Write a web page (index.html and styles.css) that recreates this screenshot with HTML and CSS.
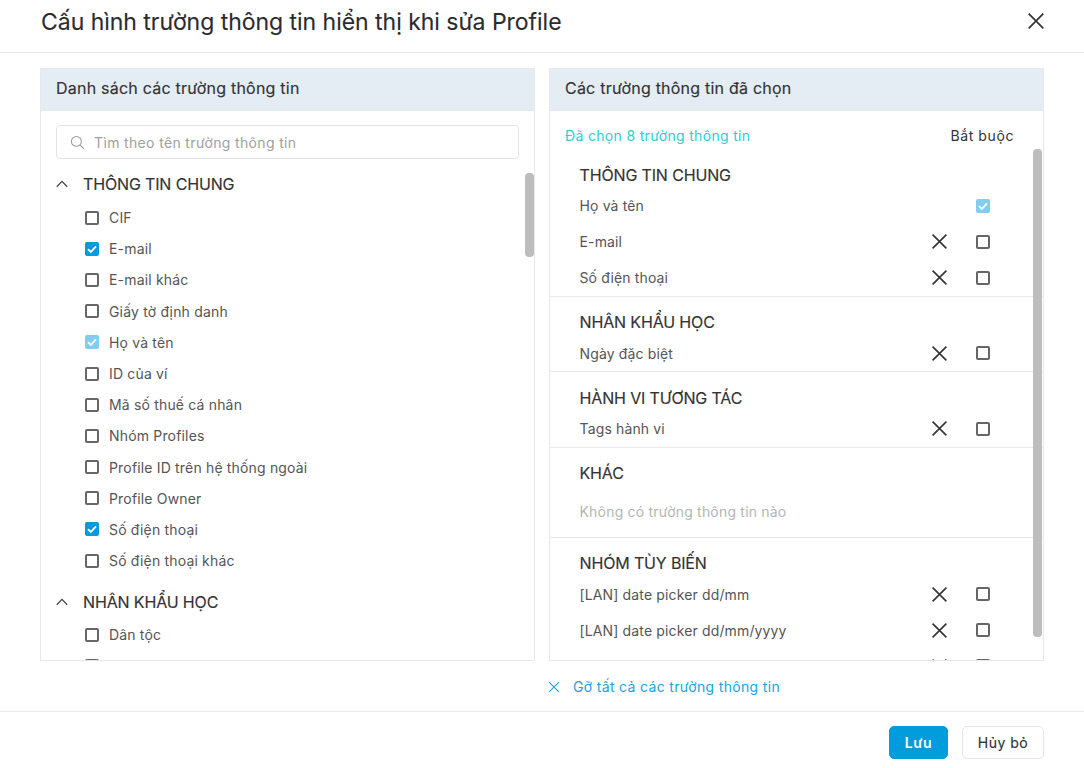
FILE: index.html
```html
<!DOCTYPE html>
<html lang="vi">
<head>
<meta charset="utf-8">
<title>Cấu hình</title>
<link rel="stylesheet" href="styles.css">
</head>
<body>
<svg class="defs" width="0" height="0" aria-hidden="true">
  <symbol id="x" viewBox="0 0 16 16"><path d="M1.5 1.5 14.5 14.5M14.5 1.5 1.5 14.5" fill="none" stroke="currentColor" stroke-width="1.5"/></symbol>
  <symbol id="chev" viewBox="0 0 12 8"><path d="M.8 6.8 6 1.4l5.2 5.4" fill="none" stroke="currentColor" stroke-width="1.3"/></symbol>
  <symbol id="tick" viewBox="0 0 14 14"><path d="M3 7.2 5.8 10 11 4.4" fill="none" stroke="#fff" stroke-width="1.8"/></symbol>
</svg>
<div class="modal">
  <header class="top">
    <h1 class="title">Cấu hình trường thông tin hiển thị khi sửa Profile</h1>
    <svg class="close"><use href="#x"/></svg>
  </header>
  <main class="columns">
    <section class="panel">
      <h2 class="panel-head">Danh sách các trường thông tin</h2>
      <div class="search">
        <svg class="search-icon" viewBox="0 0 16 16"><circle cx="6.8" cy="6.8" r="5.3" fill="none" stroke="currentColor" stroke-width="1.1"/><path d="m10.8 10.8 4 4" fill="none" stroke="currentColor" stroke-width="1.1"/></svg>
        <span>Tìm theo tên trường thông tin</span>
      </div>
      <div class="tree">
        <div class="tree-group"><svg class="chev"><use href="#chev"/></svg>THÔNG TIN CHUNG</div>
        <div class="opt"><i class="box"></i>CIF</div>
        <div class="opt"><i class="box on"><svg><use href="#tick"/></svg></i>E-mail</div>
        <div class="opt"><i class="box"></i>E-mail khác</div>
        <div class="opt"><i class="box"></i>Giấy tờ định danh</div>
        <div class="opt"><i class="box lock"><svg><use href="#tick"/></svg></i>Họ và tên</div>
        <div class="opt"><i class="box"></i>ID của ví</div>
        <div class="opt"><i class="box"></i>Mã số thuế cá nhân</div>
        <div class="opt"><i class="box"></i>Nhóm Profiles</div>
        <div class="opt"><i class="box"></i>Profile ID trên hệ thống ngoài</div>
        <div class="opt"><i class="box"></i>Profile Owner</div>
        <div class="opt"><i class="box on"><svg><use href="#tick"/></svg></i>Số điện thoại</div>
        <div class="opt"><i class="box"></i>Số điện thoại khác</div>
        <div class="tree-group second"><svg class="chev"><use href="#chev"/></svg>NHÂN KHẨU HỌC</div>
        <div class="opt"><i class="box"></i>Dân tộc</div>
        <div class="opt"><i class="box"></i></div>
      </div>
      <div class="thumb thumb-left"></div>
    </section>
    <section class="panel">
      <h2 class="panel-head">Các trường thông tin đã chọn</h2>
      <div class="summary"><span class="count">Đã chọn 8 trường thông tin</span><span class="req">Bắt buộc</span></div>
      <div class="picked">
        <div class="block first">
          <h3 class="block-title">THÔNG TIN CHUNG</h3>
          <div class="row"><span class="name">Họ và tên</span><i class="box lock"><svg><use href="#tick"/></svg></i></div>
          <div class="row"><span class="name">E-mail</span><svg class="rm"><use href="#x"/></svg><i class="box"></i></div>
          <div class="row"><span class="name">Số điện thoại</span><svg class="rm"><use href="#x"/></svg><i class="box"></i></div>
        </div>
        <div class="block">
          <h3 class="block-title">NHÂN KHẨU HỌC</h3>
          <div class="row"><span class="name">Ngày đặc biệt</span><svg class="rm"><use href="#x"/></svg><i class="box"></i></div>
        </div>
        <div class="block">
          <h3 class="block-title">HÀNH VI TƯƠNG TÁC</h3>
          <div class="row"><span class="name">Tags hành vi</span><svg class="rm"><use href="#x"/></svg><i class="box"></i></div>
        </div>
        <div class="block">
          <h3 class="block-title">KHÁC</h3>
          <p class="empty">Không có trường thông tin nào</p>
        </div>
        <div class="block">
          <h3 class="block-title">NHÓM TÙY BIẾN</h3>
          <div class="row"><span class="name">[LAN] date picker dd/mm</span><svg class="rm"><use href="#x"/></svg><i class="box"></i></div>
          <div class="row"><span class="name">[LAN] date picker dd/mm/yyyy</span><svg class="rm"><use href="#x"/></svg><i class="box"></i></div>
          <div class="row"><span class="name"></span><svg class="rm"><use href="#x"/></svg><i class="box"></i></div>
        </div>
      </div>
      <div class="thumb thumb-right"></div>
    </section>
  </main>
  <div class="clear-row">
    <a class="clear"><svg class="clear-x"><use href="#x"/></svg>Gỡ tất cả các trường thông tin</a>
  </div>
  <footer class="bottom">
    <button class="btn primary">Lưu</button>
    <button class="btn">Hủy bỏ</button>
  </footer>
</div>
</body>
</html>
```

FILE: styles.css
```css
* { box-sizing: border-box; }
html, body { margin: 0; padding: 0; background: #fff; overflow: hidden; }
body { font-family: Inter, "Noto Sans", sans-serif; color: #333; width: 1084px; height: 768px; }
.defs { position: absolute; }
.modal { height: 768px; display: flex; flex-direction: column; }

.top { height: 53px; flex: none; border-bottom: 1px solid #e6e8ee; display: flex; justify-content: space-between; align-items: flex-start; padding: 0 39px 0 41px; }
.title { margin: 0; font-size: 23px; font-weight: 400; line-height: 44px; letter-spacing: -.03px; color: #2b2b2b; -webkit-text-stroke: .1px #2b2b2b; }
.close { width: 18px; height: 18px; margin-top: 12px; color: #333; }

.columns { display: flex; gap: 14px; padding: 15px 40px 0; height: 608px; flex: none; }
.panel { position: relative; width: 495px; height: 593px; border: 1px solid #e6e8ee; overflow: hidden; }
.panel-head { margin: 0; height: 42px; background: #e4ecf4; border-bottom: 1px solid #e6e8ee; padding-left: 15px; font-size: 16px; font-weight: 400; letter-spacing: .22px; line-height: 39px; color: #333; -webkit-text-stroke: .15px #333; }

.search { margin: 14px 15px 0; height: 34px; border: 1px solid #e2e4ea; border-radius: 4px; display: flex; align-items: center; padding-left: 13px; gap: 9px; font-size: 14px; color: #a0a0a0; letter-spacing: .35px; }
.search-icon { width: 15px; height: 15px; color: #9a9a9a; }

.tree { margin-top: 6px; padding-left: 15px; }
.tree-group { height: 37px; display: flex; align-items: center; font-size: 16px; color: #333; letter-spacing: -.15px; -webkit-text-stroke: .15px #333; }
.tree-group.second { margin-top: 9px; height: 34px; }
.chev { width: 12px; height: 8px; margin-right: 15px; color: #444; }
.opt { height: 31.2px; display: flex; align-items: center; padding-left: 29px; gap: 10px; font-size: 14px; color: #555; letter-spacing: .17px; }

.box { flex: none; display: block; width: 14px; height: 14px; border: 2px solid #666; border-radius: 2px; background: #fff; position: relative; }
.box svg { position: absolute; inset: -2px; width: 14px; height: 14px; }
.box.on { background: #009cdb; border-color: #009cdb; }
.box.lock { background: #80cdf0; border-color: #80cdf0; }

.thumb { position: absolute; background: #bdbdbd; border-radius: 4px; width: 9px; }
.thumb-left { left: 484px; top: 104px; height: 84px; }
.thumb-right { left: 483px; top: 80px; height: 488px; }

.summary { height: 38px; margin-top: 5px; padding: 0 29px 0 15px; display: flex; justify-content: space-between; align-items: center; font-size: 14px; letter-spacing: .33px; }
.count { color: #2bcfd4; }
.req { color: #333; letter-spacing: .6px; }

.block { border-bottom: 1px solid #e6e8ee; padding: 12.5px 0 0 29.5px; }
.block.first { padding-top: 8px; }
.block:last-child { border-bottom: 0; }
.block-title { margin: 0; height: 26px; font-size: 16px; font-weight: 400; line-height: 26px; letter-spacing: -.15px; color: #333; -webkit-text-stroke: .15px #333; }
.row { height: 36px; display: flex; align-items: center; padding-right: 53px; font-size: 14px; color: #555; letter-spacing: .14px; }
.first .block-title + .row { height: 35.5px; }
.name { flex: 1; }
.rm { width: 17px; height: 17px; color: #333; margin-right: 28px; }
.empty { margin: 0; height: 50.5px; padding-top: 6px; line-height: 40px; font-size: 14px; color: #b5b5b5; letter-spacing: .2px; }

.clear-row { height: 51px; flex: none; padding: 10px 0 0 548px; border-bottom: 1px solid #e6e8ee; }
.clear { display: flex; align-items: center; height: 31px; gap: 13px; font-size: 14px; color: #1aa3e0; letter-spacing: .33px; }
.clear-x { width: 12px; height: 12px; color: #1aa3e0; }

.bottom { flex: 1; display: flex; justify-content: flex-end; align-items: flex-start; padding: 14px 40px 0 0; gap: 14px; }
.btn { height: 33px; width: 82px; border: 1px solid #e4e6ec; border-radius: 5px; background: #fff; color: #333; font: 400 14px Inter, sans-serif; letter-spacing: .5px; -webkit-text-stroke: .15px #333; padding: 0; }
.btn.primary { width: 59px; background: #009cdb; border-color: #009cdb; color: #fff; font-weight: 600; letter-spacing: .6px; -webkit-text-stroke: 0; }
```
